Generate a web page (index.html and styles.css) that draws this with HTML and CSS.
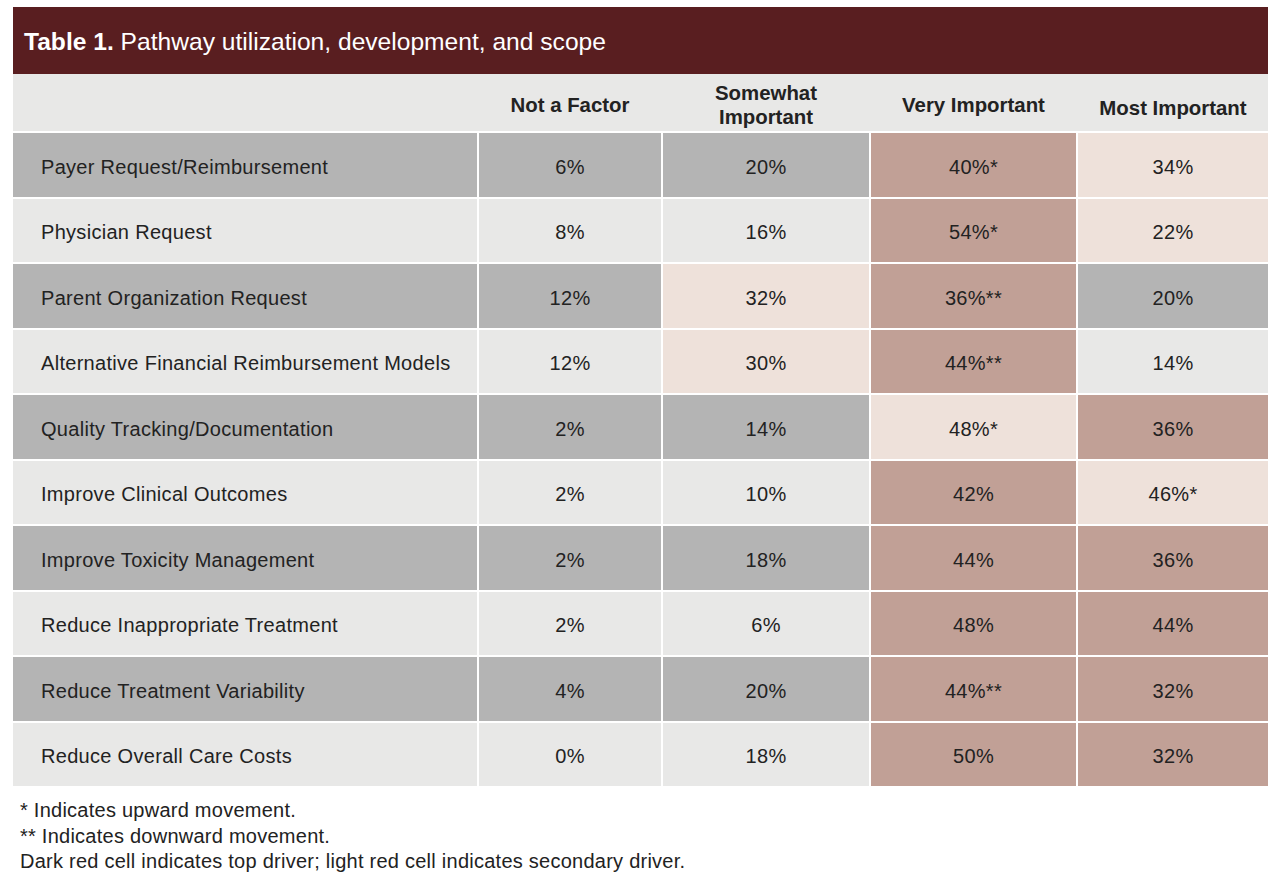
FILE: index.html
```html
<!DOCTYPE html>
<html lang="en">
<head>
<meta charset="utf-8">
<title>Table 1. Pathway utilization, development, and scope</title>
<link rel="stylesheet" href="styles.css">
</head>
<body>
<div class="page">
  <div class="title-bar"><span class="title-text"><b>Table 1.</b> Pathway utilization, development, and scope</span></div>
  <div class="head-row">
    <div class="hcell"></div>
    <div class="hcell">Not a Factor</div>
    <div class="hcell">Somewhat<br>Important</div>
    <div class="hcell">Very Important</div>
    <div class="hcell low">Most Important</div>
  </div>
  <div class="body-grid">
    <div class="cell label dg">Payer Request/Reimbursement</div>
    <div class="cell dg">6%</div>
    <div class="cell dg">20%</div>
    <div class="cell rose">40%*</div>
    <div class="cell pink">34%</div>

    <div class="cell label lg">Physician Request</div>
    <div class="cell lg">8%</div>
    <div class="cell lg">16%</div>
    <div class="cell rose">54%*</div>
    <div class="cell pink">22%</div>

    <div class="cell label dg">Parent Organization Request</div>
    <div class="cell dg">12%</div>
    <div class="cell pink">32%</div>
    <div class="cell rose">36%**</div>
    <div class="cell dg">20%</div>

    <div class="cell label lg">Alternative Financial Reimbursement Models</div>
    <div class="cell lg">12%</div>
    <div class="cell pink">30%</div>
    <div class="cell rose">44%**</div>
    <div class="cell lg">14%</div>

    <div class="cell label dg">Quality Tracking/Documentation</div>
    <div class="cell dg">2%</div>
    <div class="cell dg">14%</div>
    <div class="cell pink">48%*</div>
    <div class="cell rose">36%</div>

    <div class="cell label lg">Improve Clinical Outcomes</div>
    <div class="cell lg">2%</div>
    <div class="cell lg">10%</div>
    <div class="cell rose">42%</div>
    <div class="cell pink">46%*</div>

    <div class="cell label dg">Improve Toxicity Management</div>
    <div class="cell dg">2%</div>
    <div class="cell dg">18%</div>
    <div class="cell rose">44%</div>
    <div class="cell rose">36%</div>

    <div class="cell label lg">Reduce Inappropriate Treatment</div>
    <div class="cell lg">2%</div>
    <div class="cell lg">6%</div>
    <div class="cell rose">48%</div>
    <div class="cell rose">44%</div>

    <div class="cell label dg">Reduce Treatment Variability</div>
    <div class="cell dg">4%</div>
    <div class="cell dg">20%</div>
    <div class="cell rose">44%**</div>
    <div class="cell rose">32%</div>

    <div class="cell label lg">Reduce Overall Care Costs</div>
    <div class="cell lg">0%</div>
    <div class="cell lg">18%</div>
    <div class="cell rose">50%</div>
    <div class="cell rose">32%</div>
  </div>
  <div class="notes">
    <p>* Indicates upward movement.</p>
    <p>** Indicates downward movement.</p>
    <p>Dark red cell indicates top driver; light red cell indicates secondary driver.</p>
  </div>
</div>
</body>
</html>
```

FILE: styles.css
```css
html, body {
  margin: 0;
  padding: 0;
  background: #ffffff;
}

.page {
  padding: 7px 10px 0 13px;
  font-family: "Liberation Sans", Arial, Helvetica, sans-serif;
  color: #222222;
  width: 1255px;
}

.title-bar {
  background: #591e20;
  color: #ffffff;
  height: 67px;
  display: flex;
  align-items: center;
  padding-left: 11px;
  box-sizing: border-box;
  font-size: 24.6px;
  padding-top: 2px;
}

.title-text b {
  font-weight: bold;
}

.head-row {
  display: grid;
  grid-template-columns: 464px 182px 206px 205px 190px;
  column-gap: 2px;
  background: #e8e8e7;
  height: 57px;
}

.hcell {
  display: flex;
  align-items: center;
  justify-content: center;
  text-align: center;
  font-weight: bold;
  font-size: 20.4px;
  line-height: 24px;
  color: #222222;
  padding-top: 4px;
}

.hcell.low {
  padding-top: 10px;
}

.body-grid {
  margin-top: 2px;
  display: grid;
  grid-template-columns: 464px 182px 206px 205px 190px;
  grid-auto-rows: 63.5px;
  gap: 2px;
}

.cell {
  display: flex;
  align-items: center;
  justify-content: center;
  font-size: 20px;
  letter-spacing: 0.3px;
  color: #222222;
  padding-top: 5px;
}

.cell.label {
  justify-content: flex-start;
  padding-left: 28px;
}

.dg { background: #b4b4b4; }
.lg { background: #e8e8e7; }
.rose { background: #c1a096; }
.pink { background: #eee1da; }

.notes {
  margin-top: 12px;
  font-size: 20px;
  letter-spacing: 0.25px;
  line-height: 25.5px;
  color: #222222;
  padding-left: 7px;
}

.notes p {
  margin: 0;
}
```
